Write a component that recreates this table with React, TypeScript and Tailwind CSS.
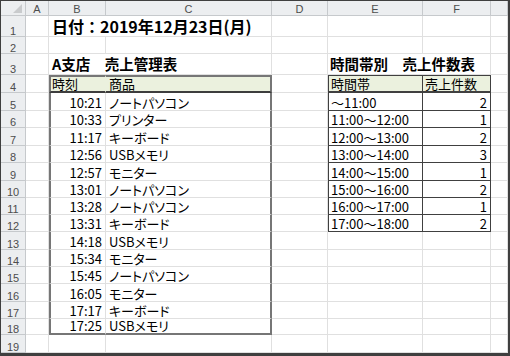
import React from "react";

const sales: [string, string][] = [
  ["10:21", "ノートパソコン"],
  ["10:33", "プリンター"],
  ["11:17", "キーボード"],
  ["12:56", "USBメモリ"],
  ["12:57", "モニター"],
  ["13:01", "ノートパソコン"],
  ["13:28", "ノートパソコン"],
  ["13:31", "キーボード"],
  ["14:18", "USBメモリ"],
  ["15:34", "モニター"],
  ["15:45", "ノートパソコン"],
  ["16:05", "モニター"],
  ["17:17", "キーボード"],
  ["17:25", "USBメモリ"],
];

const slots: [string, string][] = [
  ["～11:00", "2"],
  ["11:00～12:00", "1"],
  ["12:00～13:00", "2"],
  ["13:00～14:00", "3"],
  ["14:00～15:00", "1"],
  ["15:00～16:00", "2"],
  ["16:00～17:00", "1"],
  ["17:00～18:00", "2"],
];

const letters = ["A", "B", "C", "D", "E", "F", ""];

const grid = "border-r border-b border-[#e0e0e0]";
const jp =
  "[font-family:'Noto_Sans_CJK_JP',sans-serif] text-[13px] leading-[14px] text-black whitespace-nowrap [font-feature-settings:'palt']";
const title =
  "[font-family:'Noto_Sans_CJK_JP',sans-serif] font-bold text-black whitespace-nowrap leading-[20px]";
const headFont = "[font-family:'Liberation_Sans',sans-serif] text-[11px] text-[#4d4d4d]";

function RowHead({ n }: { n: number }) {
  return (
    <div
      className={`flex items-end justify-center bg-[#eceef0] border-r border-b border-[#c6c9cc] leading-[9px] ${headFont}`}
    >
      {n}
    </div>
  );
}

function SheetRow({ r }: { r: number }) {
  const cells: React.ReactNode[] = [<RowHead key="h" n={r} />];

  // A
  cells.push(<div key="a" className={grid} />);

  // B and C
  if (r === 1) {
    cells.push(
      <div key="bc" className={`col-span-2 flex items-end pl-[3px] ${grid}`}>
        <span className={`${title} text-[16px]`}>日付：2019年12月23日(月)</span>
      </div>
    );
  } else if (r === 3) {
    cells.push(
      <div key="bc" className={`col-span-2 flex items-end pl-[3px] ${grid}`}>
        <span className={`${title} text-[14.5px]`}>A支店　売上管理表</span>
      </div>
    );
  } else if (r === 4) {
    cells.push(
      <div
        key="b"
        className="flex items-end pl-[1px] bg-[#ebf1de] border-l-2 border-t-2 border-b-2 border-r border-l-[#767676] border-t-[#767676] border-b-[#3d3d3d] border-r-transparent"
      >
        <span className={jp}>時刻</span>
      </div>
    );
    cells.push(
      <div
        key="c"
        className="flex items-end pl-[3px] bg-[#ebf1de] border-t-2 border-r-2 border-b-2 border-t-[#767676] border-r-[#767676] border-b-[#3d3d3d]"
      >
        <span className={jp}>商品</span>
      </div>
    );
  } else if (r >= 5 && r <= 18) {
    const [t, p] = sales[r - 5];
    const last = r === 18;
    cells.push(
      <div
        key="b"
        className={
          last
            ? "flex items-end justify-end pr-[3px] border-l-2 border-r border-b-2 border-l-[#767676] border-r-[#e0e0e0] border-b-[#767676]"
            : "flex items-end justify-end pr-[3px] border-l-2 border-r border-b border-l-[#767676] border-r-[#e0e0e0] border-b-[#e0e0e0]"
        }
      >
        <span className={jp}>{t}</span>
      </div>
    );
    cells.push(
      <div
        key="c"
        className={
          last
            ? "flex items-end pl-[3px] border-r-2 border-b-2 border-r-[#767676] border-b-[#767676]"
            : "flex items-end pl-[3px] border-r-2 border-b border-r-[#767676] border-b-[#e0e0e0]"
        }
      >
        <span className={jp}>{p}</span>
      </div>
    );
  } else {
    cells.push(<div key="b" className={grid} />);
    cells.push(<div key="c" className={grid} />);
  }

  // D
  cells.push(<div key="d" className={grid} />);

  // E and F
  if (r === 3) {
    cells.push(
      <div key="ef" className={`col-span-2 flex items-end pl-[2px] ${grid}`}>
        <span className={`${title} text-[14.5px]`}>時間帯別　売上件数表</span>
      </div>
    );
  } else if (r === 4) {
    cells.push(
      <div
        key="e"
        className="flex items-end pl-[2px] bg-[#ebf1de] border-l border-t border-r border-b-2 border-[#404040]"
      >
        <span className={jp}>時間帯</span>
      </div>
    );
    cells.push(
      <div
        key="f"
        className="flex items-end pl-[2px] bg-[#ebf1de] border-t border-r border-b-2 border-[#404040]"
      >
        <span className={jp}>売上件数</span>
      </div>
    );
  } else if (r >= 5 && r <= 12) {
    const [s, n] = slots[r - 5];
    cells.push(
      <div key="e" className="flex items-end pl-[2px] border-l border-r border-b border-[#404040]">
        <span className={jp}>{s}</span>
      </div>
    );
    cells.push(
      <div key="f" className="flex items-end justify-end pr-[3px] border-r border-b border-[#404040]">
        <span className={jp}>{n}</span>
      </div>
    );
  } else {
    cells.push(<div key="e" className={grid} />);
    cells.push(<div key="f" className={grid} />);
  }

  // G
  cells.push(<div key="g" className={grid} />);

  return <>{cells}</>;
}

export default function App() {
  const rows = Array.from({ length: 19 }, (_, i) => i + 1);
  return (
    <div className="w-[510px] h-[356px] bg-white border-l border-t border-r-2 border-b-[3px] border-[#3f3f3f] overflow-hidden">
      <div className="grid grid-cols-[25px_23px_57px_166px_56px_95px_68px_17px] grid-rows-[15px_21px_17px_21px_18px_18px_17px_18px_17px_18px_17px_17px_17px_18px_17px_17px_18px_17px_16px_18px]">
        {/* select-all corner */}
        <div className="flex items-end justify-end pr-[3px] pb-[2px] bg-[#eceef0] border-r border-b border-[#c6c9cc]">
          <svg width="9" height="9" viewBox="0 0 9 9">
            <polygon points="9,0 9,9 0,9" fill="#c9cbcd" />
          </svg>
        </div>
        {letters.map((l, i) => (
          <div
            key={i}
            className={`flex items-center justify-center pt-[2px] bg-[#eceef0] border-r border-b border-[#c6c9cc] leading-none ${headFont}`}
          >
            {l}
          </div>
        ))}
        {rows.map((r) => (
          <SheetRow key={r} r={r} />
        ))}
      </div>
    </div>
  );
}
